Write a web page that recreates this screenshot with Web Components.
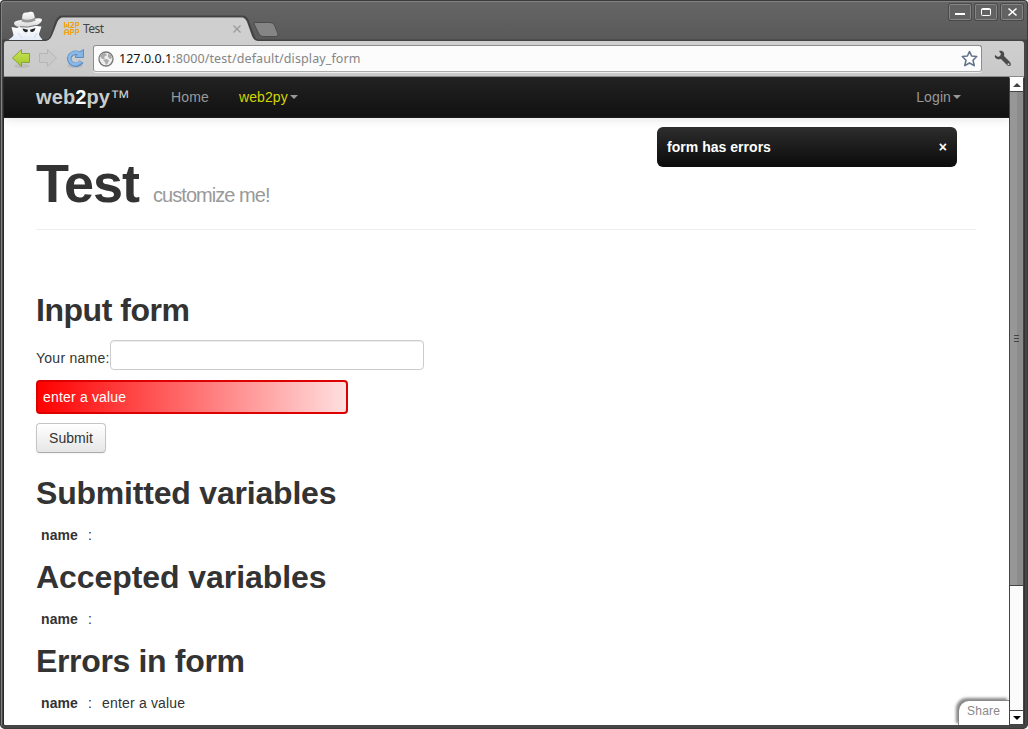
<!DOCTYPE html>
<html lang="en"><head><meta charset="utf-8"><title>Test</title>
<style>html,body{margin:0;height:100%;overflow:hidden;background:#fff}body{font:14px/20px "Liberation Sans",Arial,sans-serif;color:#333}</style></head>
<body>
<browser-window>
  <tab-strip slot="tabs">Test</tab-strip>
  <address-bar slot="toolbar"><b slot="host">127.0.0.1</b>:8000/test/default/display_form</address-bar>
  <nav-bar slot="page"></nav-bar>
  <page-hero slot="page">Test<span slot="sub">customize me!</span></page-hero>
  <input-form slot="page"></input-form>
  <var-section slot="page" heading="Submitted variables" style="--track:-.2px"></var-section>
  <var-section slot="page" heading="Accepted variables" style="--track:-.07px"></var-section>
  <var-section slot="page" heading="Errors in form" style="--track:-.34px">enter a value</var-section>
  <flash-message slot="over">form has errors</flash-message>
  <share-tab slot="over">Share</share-tab>
  <scroll-bar slot="scroll"></scroll-bar>
</browser-window>
<script>
const define=(name,html)=>customElements.define(name,class extends HTMLElement{
  constructor(){super();const t=document.createElement('template');
    t.innerHTML='<style>*{box-sizing:border-box}:host{display:block;box-sizing:border-box}</style>'+html;
    this.attachShadow({mode:'open'}).append(t.content.cloneNode(true));}
  connectedCallback(){const h=this.shadowRoot.querySelector('[data-heading]');if(h)h.textContent=this.getAttribute('heading');}
});

define('browser-window',`<style>
:host{width:1028px;height:729px;padding:0 4px 4px;border-radius:4px 4px 5px 5px;display:flex;flex-direction:column;overflow:hidden;position:relative;
 background:linear-gradient(#666,#595959 40px,#464646 41px)}
.edge{position:absolute;inset:0;border:1px solid #3a3a3a;border-radius:4px 4px 5px 5px;pointer-events:none;box-shadow:inset 1px 1px #828282}
.view{flex:1;display:flex;min-height:0}
.page{flex:1;position:relative;background:#fff;overflow:hidden;min-width:0;border-radius:0 0 0 1px;box-shadow:-1px 0 #282828}
</style><slot name="tabs"></slot><slot name="toolbar"></slot>
<div class="view"><div class="page"><slot name="page"></slot><slot name="over"></slot></div><slot name="scroll"></slot></div><div class="edge"></div>`);

define('tab-strip',`<style>
:host{height:41px;position:relative;flex:none}
svg{display:block;margin-left:-4px}
.title{position:absolute;left:79px;top:19px;font:12px/20px "Noto Sans",sans-serif;letter-spacing:-.5px;color:#444}
</style>
<svg width="1028" height="41" viewBox="0 0 1028 41">
<defs><linearGradient id="h" x2="0" y2="1"><stop stop-color="#fff"/><stop offset="1" stop-color="#d4d4d4"/></linearGradient>
<linearGradient id="c" x2="0" y2="1"><stop stop-color="#fff"/><stop offset="1" stop-color="#e3ebf7"/></linearGradient></defs>
<path d="M0 40.500H47C50 40 51 37 52 34L56 22Q58 17 62 16.500H242Q246 16.500 248 21L253 35Q254.500 40.500 258 40.500H1028" fill="none" stroke="#424242" stroke-width="2"/>
<path d="M46 41C50 40 51.500 37 53 33L57 23Q59 17.500 63 17.500H242Q245 17.500 247 22L252 36Q254 41 258 41Z" fill="#cfcfcf"/>
<path d="M255 22.500H270Q273 22.500 274.500 25L278 34Q278.500 36.500 276 36.500H263Q260 36.500 258.500 33L254 24Q253.500 22.500 255 22.500Z" fill="#858585" stroke="#4c4c4c"/>
<path d="M8.500 40C10 38.500 13 37 13.500 35L11.500 27L17 28L21 26H36L41.500 26.500L39 34C39 36 42 38.500 42.500 40Z" fill="url(#c)"/>
<path d="M21 25H36L35.500 30L33 33L27 36L22 32Z" fill="#f2f4f8"/>
<path d="M14 23Q14 21 21 20L36 18.500Q42 17.500 42 20Q41 24 34 26Q26 28 19 27Q14 26 14 23Z" fill="url(#h)"/>
<path d="M20 26.700Q27 28.200 36 25.300" stroke="#777" fill="none"/>
<path d="M21.500 21.500L22.500 15Q23 12 26 12.500Q28 12.800 30 11.800Q33.500 11 34 14L35.500 20.500Q29 24 21.500 21.500Z" fill="url(#h)"/>
<path d="M21.800 18.500Q28 21.500 35 17.800L35.500 20.500Q29 24 21.500 21.500Z" fill="#989898"/>
<path d="M22.500 28.500L28 29.800Q28 32.500 25.500 32.300Q23 31.500 22.500 28.500ZM35.500 28L30 29.700Q30 32.500 32.500 32Q35 31.200 35.500 28Z" fill="#222"/>
<path d="M18 33L22 38M34 38L37 33" stroke="#d3d9e4"/>
<g fill="none" stroke="#eba21c"><path d="M64.500 22V27L66.500 26L68.500 27V22M66.500 24V26.500M70 22.500H73L73.500 24L70.500 27.500H74M75.500 28V22.500H78L78.500 24.500L78 25.500H75.500M64.500 35V31L66 29.500H67L68.500 31V35M64.500 32.500H68.500M70.500 35V29.500H73L73.500 31.500L73 32.500H70.500M75.500 35V29.500H78L78.500 31.500L78 32.500H75.500" stroke-width="1.200"/></g>
<path d="M233.500 25.500L240.500 32.500M240.500 25.500L233.500 32.500" stroke="#999" stroke-width="1.300"/>
<g fill="#626262" stroke="#858585"><rect x="949.500" y="4.500" width="21" height="15" rx="1"/><rect x="975.500" y="4.500" width="21" height="15" rx="1"/><rect x="1001.500" y="4.500" width="21" height="15" rx="1"/></g>
<g fill="none" stroke="#404040" stroke-opacity=".7"><rect x="948.500" y="3.500" width="23" height="17" rx="1.500"/><rect x="974.500" y="3.500" width="23" height="17" rx="1.500"/><rect x="1000.500" y="3.500" width="23" height="17" rx="1.500"/></g>
<g stroke="#fff" fill="none"><path d="M955 14H965" stroke-width="2"/><rect x="981.500" y="8.500" width="9" height="7" rx="1"/><path d="M981.500 9.500H990.500"/><path d="M1008.500 8.500L1016.500 15.500M1016.500 8.500L1008.500 15.500" stroke-width="1.600"/></g>
</svg><span class="title"><slot></slot></span>`);

define('address-bar',`<style>
:host{height:36px;flex:none;background:linear-gradient(#cfcfcf,#c9c9c9);border-bottom:1px solid #8b8b8b;border-radius:3px 3px 0 0;display:flex;align-items:flex-start;padding:4px 0 0 6px}
.nav{flex:none;width:83px;height:30px}
.box{width:889px;height:27px;background:#fcfcfc;border:1px solid #8d8d8d;border-bottom-color:#aaa;box-shadow:0 1px #eee;border-radius:3px;display:flex;align-items:center;padding:0 3px 0 4px}
.url{flex:1;margin-left:5px;font:12.500px/20px "Noto Sans",sans-serif;color:#858585;letter-spacing:.11px}
::slotted(b){font-weight:400;color:#111;letter-spacing:.03px}
.wrench{margin:5px 0 0 12px}
</style>
<svg class="nav" viewBox="10 45 83 30"><defs><linearGradient id="g" x2="0" y2="1"><stop stop-color="#cbe657"/><stop offset="1" stop-color="#a2c52c"/></linearGradient></defs>
<ellipse cx="22" cy="66" rx="8" ry="2" fill="#bcbcbc"/><ellipse cx="75" cy="66" rx="8" ry="2" fill="#bbb"/>
<path d="M12.500 58L21.500 49.500V53.500H29.500V62.500H21.500V66.500Z" fill="url(#g)" stroke="#85a433"/>
<path d="M56.500 58L47.500 49.500V53.500H39.500V62.500H47.500V66.500Z" fill="#c9c9c9" stroke="#b5b5b5"/>
<path d="M81.500 61.500A6.500 6 0 1 1 79 53.500" fill="none" stroke="#5b8fc4" stroke-width="4.600"/><path d="M83.500 49.500V57.500H75.500V55.500L78 54L79.500 52Z" fill="#82b3e2" stroke="#5b8fc4"/><path d="M80.800 61.500A6.300 5.800 0 1 1 79 53.500L81 55" fill="none" stroke="#8ab8e6" stroke-width="3"/>
</svg><div class="box"><svg width="16" height="16" viewBox="0 0 16 16"><circle cx="8" cy="8" r="7" fill="#eee" stroke="#777" stroke-width="1.300"/><path d="M3 3L7 2L9 4L6 6L7 8L4 8L2 5ZM8 8L11 9L10 12L8 14L7 11L5 9ZM10 3L13 4L14 7L12 8L10 6Z" fill="#aaa"/></svg>
<span class="url"><slot name="host"></slot><slot></slot></span>
<svg width="18" height="18" viewBox="0 0 18 18"><path d="M9.500 1.500L11.600 6L16.700 6.500L13 10.200L14.200 15.600L9.500 13L4.800 15.600L6 10.200L2.300 6.500L7.400 6Z" fill="#fff" stroke="#65728b" stroke-width="1.600" stroke-linejoin="round"/></svg></div>
<svg class="wrench" width="18" height="18" viewBox="0 0 18 18"><path d="M5 1C9 0 11 3 10 6L16 12Q18 15 15.500 16Q13.500 16.500 12 14L7 9C3 10 0 8 1 5L4 7L6 6L7 4Z" fill="#4a4a4a"/><circle cx="14.500" cy="14.200" r="1" fill="#ccc"/></svg>`);

define('nav-bar',`<style>
:host{height:41px;background:linear-gradient(#222,#111);border-bottom:1px solid #1c1c1c;box-shadow:0 1px 10px rgba(0,0,0,.12);display:flex;align-items:center;padding:0 48px 1px 32px;color:#999}
.brand{font-size:20px;font-weight:700;color:#c8cccc;width:135px;white-space:nowrap;letter-spacing:.1px}.brand b{color:#fff}.brand i{font-weight:400;font-style:normal}
.home{width:68px;letter-spacing:.15px}.w{color:#d2d600;letter-spacing:.1px;flex:1}.w,.l{display:flex;align-items:center}.l{letter-spacing:.1px}
i.c{border:4px solid transparent;border-top-color:#999;border-bottom:0;margin-left:2px}
</style><span class="brand">web<b>2</b>py<i>™</i></span><span class="home">Home</span><span class="w">web2py<i class="c"></i></span><span class="l">Login<i class="c"></i></span>`);

define('page-hero',`<style>
:host{height:112px;margin:0 33px 0 32px;border-bottom:1px solid #eee;padding-top:37px}
h1{margin:0;font-size:54px;line-height:56px;letter-spacing:-1px;white-space:nowrap}
small{font-size:20px;font-weight:400;color:#999;margin-left:14px;letter-spacing:-.95px}
</style><h1><slot></slot><small><slot name="sub"></slot></small></h1>`);

define('input-form',`<style>
:host{padding:60px 32px 0}
h2{margin:0;font-size:32px;line-height:40px;letter-spacing:-.46px}
.row{display:flex;height:40px;margin-top:10px}
label{width:74px;padding-top:8px;letter-spacing:.26px;white-space:nowrap}
input{width:314px;height:30px;border:1px solid #ccc;border-radius:4px;box-shadow:inset 0 1px 1px rgba(0,0,0,.075);background:#fff;margin:0}
.err{width:312px;height:34px;border:2px solid #d00;border-radius:4px;background:linear-gradient(90deg,red,#ffdfdf);color:#fff;padding:5px;letter-spacing:.18px}
button{display:block;margin:9px 0 20px;width:70px;height:30px;padding:0;font:14px/20px "Liberation Sans",sans-serif;letter-spacing:.08px;color:#333;border:1px solid #c5c5c5;border-bottom-color:#aaa;border-radius:4px;background:linear-gradient(#fff,#e6e6e6);box-shadow:0 1px 2px rgba(0,0,0,.05)}
</style><h2>Input form</h2><div class="row"><label for="n">Your name:</label><input id="n"></div><div class="err">enter a value</div><button>Submit</button>`);

define('var-section',`<style>
:host{height:84px;padding:0 32px}
h2{margin:0;font-size:32px;line-height:40px;white-space:nowrap;letter-spacing:var(--track)}
.row{display:flex;padding:12px 5px 0}b{width:47px;letter-spacing:.1px}.c{width:14px}.v{letter-spacing:.18px}
</style><h2 data-heading></h2><div class="row"><b>name</b><span class="c">:</span><span class="v"><slot></slot></span></div>`);

define('flash-message',`<style>
:host{position:absolute;left:653px;top:50px;width:300px;height:40px;border-radius:6px;background:linear-gradient(#2d2d2d,#0b0b0b);color:#fff;font-weight:700;display:flex;justify-content:space-between;padding:10px;letter-spacing:.03px}
</style><span><slot></slot></span><span>×</span>`);

define('share-tab',`<style>
:host{position:absolute;right:0;bottom:0;width:51px;height:25px;background:#fff;border:1px solid #8a8a8a;border-width:1px 0 0 1px;border-top-left-radius:11px;box-shadow:-2px -2px 3px #888;color:#888;font-size:12px;line-height:20px;padding-left:8px;letter-spacing:.25px}
</style><slot></slot>`);

define('scroll-bar',`<style>
:host{width:15px;flex:none;background:#fbfbfb;border:1px solid #444;border-top-color:#fff;display:flex;flex-direction:column;box-shadow:1px 0 #333}
.b{height:14px;display:grid;place-items:center;background:#fff;flex:none}
.thumb{height:495px;margin-top:-1px;border:solid #444;border-width:1px 0;background:linear-gradient(90deg,#979797 54%,#8b8b8b 54%);display:flex;flex-direction:column;align-items:center;justify-content:center;gap:2px}
.thumb i{width:5px;height:1px;background:#444}
.d{margin-top:auto;border-top:1px solid #444}
</style><div class="b"><svg width="8" height="4"><path d="M4 0L8 4H0Z" fill="#444"/></svg></div><div class="thumb"><i></i><i></i><i></i></div><div class="b d"><svg width="8" height="4"><path d="M0 0H8L4 4Z"/></svg></div>`);
</script></body></html>
